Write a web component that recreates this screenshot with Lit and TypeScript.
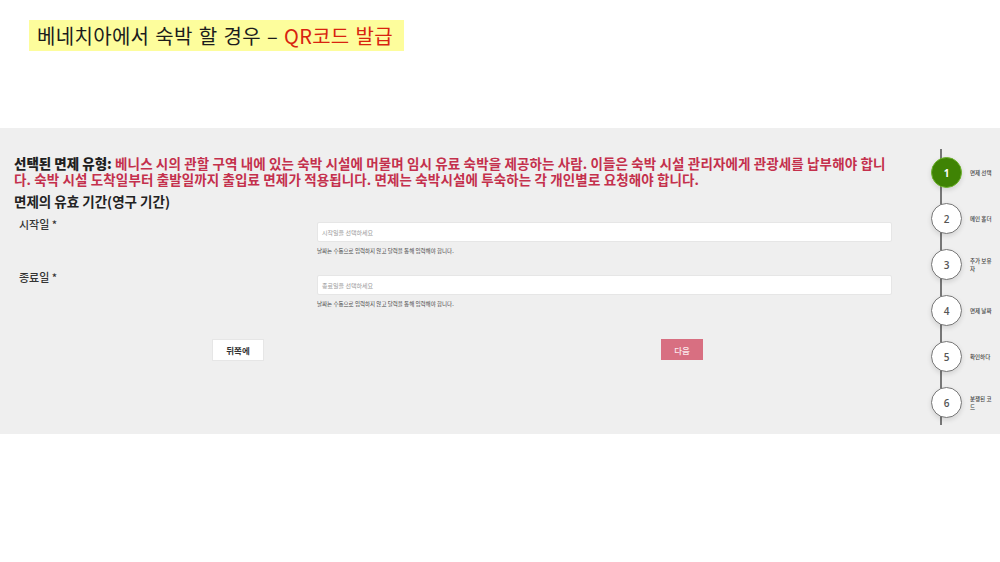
import { LitElement, html, css } from "lit";
import { customElement } from "lit/decorators.js";

const STEPS = ["면제 선택", "메인 홀더", "추가 보유자", "면제 날짜", "확인하다", "분쟁된 코드"];

@customElement("app-root")
export class AppRoot extends LitElement {
  static styles = css`
    :host {
      display: block;
      width: 1000px;
      height: 562px;
      background: #fff;
      overflow: hidden;
      font-family: "Noto Sans CJK KR", "Noto Sans", sans-serif;
      color: #222;
    }
    .top { height: 128px; padding: 20px 0 0 29px; box-sizing: border-box; }
    .banner {
      display: inline-flex;
      align-items: center;
      width: 375px;
      height: 31px;
      box-sizing: border-box;
      padding-left: 8px;
      background: #fdfd9c;
      font-size: 20px;
      letter-spacing: 0.32px;
      word-spacing: 1.2px;
      white-space: pre;
      color: #1c1c1c;
    }
    .banner em { font-style: normal; color: #d8230f; }
    .panel {
      height: 306px;
      background: #efefef;
      display: grid;
      grid-template-columns: 930px 70px;
    }
    .main { padding: 27px 38px 0 14px; min-width: 0; }
    .intro {
      margin: 0;
      font-size: 13.5px;
      line-height: 16px;
      font-weight: 700;
      color: #c4304c;
      letter-spacing: 0.12px;
      word-break: break-all;
    }
    .intro b { color: #1f1f1f; letter-spacing: 0; }
    h2 {
      margin: 4px 0 0;
      font-size: 13.5px;
      line-height: 20px;
      font-weight: 700;
      color: #222;
    }
    .row {
      display: grid;
      grid-template-columns: 303px 1fr;
      height: 53px;
    }
    .row.first { margin-top: 6px; }
    label {
      font-size: 11px;
      line-height: 14px;
      font-weight: 500;
      color: #333;
      padding-left: 5px;
    }
    .field { min-width: 0; padding-top: 5px; }
    .input {
      height: 18px;
      background: #fff;
      border: 1px solid #e6e6e6;
      border-radius: 2px;
      display: flex;
      align-items: center;
      padding-left: 4px;
      font-size: 6px;
      color: #999;
    }
    .hint { font-size: 5.5px; line-height: 8px; margin-top: 5px; color: #444; }
    .actions {
      display: grid;
      grid-template-columns: 1fr 1fr;
      margin-top: 16px;
    }
    .btn {
      justify-self: start;
      display: flex;
      align-items: center;
      justify-content: center;
      height: 21px;
      box-sizing: border-box;
      font-size: 8.5px;
      font-weight: 700;
    }
    .back {
      width: 52px;
      height: 22px;
      margin-left: 198px;
      background: #fff;
      border: 1px solid #e6e6e6;
      color: #333;
    }
    .next {
      width: 42px;
      margin-left: 208px;
      background: #d86f81;
      color: #fbe9ec;
      font-weight: 500;
    }
    .stepper {
      position: relative;
      padding-top: 29px;
      display: flex;
      flex-direction: column;
      gap: 15px;
    }
    .line {
      position: absolute;
      left: 10px;
      top: 21px;
      width: 2px;
      height: 276px;
      background: #777;
    }
    .step {
      position: relative;
      display: flex;
      align-items: center;
      height: 31px;
      padding-left: 1px;
      gap: 8px;
    }
    .dot {
      flex: none;
      width: 31px;
      height: 31px;
      box-sizing: border-box;
      border-radius: 50%;
      border: 1.5px solid #777;
      background: #fff;
      display: flex;
      align-items: center;
      justify-content: center;
      font-family: "Open Sans", "Noto Sans", sans-serif;
      font-size: 10px;
      font-weight: 600;
      color: #555;
      box-shadow: 0 2px 5px rgba(0, 0, 0, 0.12);
    }
    .step.active .dot {
      background: #3f8304;
      border: 1px solid #6db22c;
      color: #fff;
      font-weight: 700;
    }
    .name {
      width: 24px;
      font-size: 5.5px;
      line-height: 8px;
      color: #444;
      font-weight: 500;
      word-break: break-all;
    }
  `;

  render() {
    return html`
      <div class="top">
        <div class="banner">베네치아에서 숙박 할 경우 – <em>QR코드 발급</em></div>
      </div>
      <section class="panel">
        <div class="main">
          <p class="intro">
            <b>선택된 면제 유형:</b> 베니스 시의 관할 구역 내에 있는 숙박 시설에 머물며 임시 유료 숙박을 제공하는 사람. 이들은 숙박 시설 관리자에게 관광세를 납부해야 합니다. 숙박 시설 도착일부터 출발일까지 출입료 면제가 적용됩니다. 면제는 숙박시설에 투숙하는 각 개인별로 요청해야 합니다.
          </p>
          <h2>면제의 유효 기간(영구 기간)</h2>
          ${this.field("시작일 *", "시작일을 선택하세요", true)}
          ${this.field("종료일 *", "종료일을 선택하세요", false)}
          <div class="actions">
            <div class="btn back">뒤쪽에</div>
            <div class="btn next">다음</div>
          </div>
        </div>
        <nav class="stepper">
          <div class="line"></div>
          ${STEPS.map(
            (s, i) => html`
              <div class="step ${i === 0 ? "active" : ""}">
                <div class="dot">${i + 1}</div>
                <div class="name">${s}</div>
              </div>
            `
          )}
        </nav>
      </section>
    `;
  }

  private field(label: string, placeholder: string, first: boolean) {
    return html`
      <div class="row ${first ? "first" : ""}">
        <label>${label}</label>
        <div class="field">
          <div class="input">${placeholder}</div>
          <div class="hint">날짜는 수동으로 입력하지 않고 달력을 통해 입력해야 합니다.</div>
        </div>
      </div>
    `;
  }
}
